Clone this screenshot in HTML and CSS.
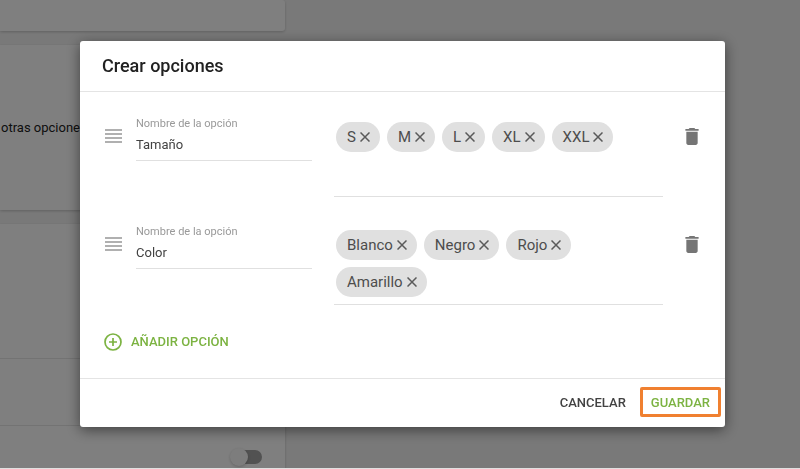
FILE: index.html
```html
<!DOCTYPE html>
<html lang="es">
<head>
    <meta charset="UTF-8" />
    <meta name="viewport" content="width=device-width, initial-scale=1" />
    <title>Crear opciones</title>
    <link rel="stylesheet" href="styles.css">
</head>
<body>
<svg class="sprite" aria-hidden="true">
    <symbol id="icon-close" viewBox="0 0 10 10"><path d="M.5.5l9 9M9.500.5l-9 9" fill="none" stroke="currentColor" stroke-width="1.5"/></symbol>
    <symbol id="icon-drag" viewBox="0 0 17 14"><path d="M0 1h17M0 5h17M0 9h17M0 13h17" fill="none" stroke="currentColor" stroke-width="2"/></symbol>
    <symbol id="icon-trash" viewBox="5 3 14 18"><path d="M6 19c0 1.1.9 2 2 2h8c1.1 0 2-.9 2-2V7H6v12zM19 4h-3.500l-1-1h-5l-1 1H5v2h14V4z" fill="currentColor"/></symbol>
    <symbol id="icon-add" viewBox="0 0 18 18"><path d="M9 5v8M5 9h8" fill="none" stroke="currentColor" stroke-width="1.700"/><circle cx="9" cy="9" r="8" fill="none" stroke="currentColor" stroke-width="1.700"/></symbol>
</svg>

<main class="page">
    <section class="card card-top"></section>
    <section class="card card-text">
        <p>otras opciones</p>
    </section>
    <section class="card card-list">
        <div class="list-block list-block-tall"></div>
        <div class="list-block"></div>
        <div class="list-block list-block-last">
            <input type="checkbox" class="switch" aria-label="Activar" />
        </div>
    </section>
</main>

<div class="overlay">
    <div class="modal" role="dialog" aria-labelledby="modalTitle">
        <header class="modal-header">
            <h1 id="modalTitle">Crear opciones</h1>
        </header>

        <div class="modal-body">
            <div class="option-row">
                <button class="icon-btn drag" aria-label="Mover"><svg width="17" height="14"><use href="#icon-drag"/></svg></button>
                <div class="field">
                    <label for="option1">Nombre de la opción</label>
                    <input type="text" id="option1" value="Tamaño" />
                </div>
                <div class="chips">
                    <span class="chip">S<button aria-label="Quitar S"><svg width="10" height="10"><use href="#icon-close"/></svg></button></span>
                    <span class="chip">M<button aria-label="Quitar M"><svg width="10" height="10"><use href="#icon-close"/></svg></button></span>
                    <span class="chip">L<button aria-label="Quitar L"><svg width="10" height="10"><use href="#icon-close"/></svg></button></span>
                    <span class="chip">XL<button aria-label="Quitar XL"><svg width="10" height="10"><use href="#icon-close"/></svg></button></span>
                    <span class="chip">XXL<button aria-label="Quitar XXL"><svg width="10" height="10"><use href="#icon-close"/></svg></button></span>
                </div>
                <button class="icon-btn trash" aria-label="Eliminar"><svg width="14" height="17"><use href="#icon-trash"/></svg></button>
            </div>

            <div class="option-row">
                <button class="icon-btn drag" aria-label="Mover"><svg width="17" height="14"><use href="#icon-drag"/></svg></button>
                <div class="field">
                    <label for="option2">Nombre de la opción</label>
                    <input type="text" id="option2" value="Color" />
                </div>
                <div class="chips">
                    <span class="chip">Blanco<button aria-label="Quitar Blanco"><svg width="10" height="10"><use href="#icon-close"/></svg></button></span>
                    <span class="chip">Negro<button aria-label="Quitar Negro"><svg width="10" height="10"><use href="#icon-close"/></svg></button></span>
                    <span class="chip">Rojo<button aria-label="Quitar Rojo"><svg width="10" height="10"><use href="#icon-close"/></svg></button></span>
                    <span class="chip">Amarillo<button aria-label="Quitar Amarillo"><svg width="10" height="10"><use href="#icon-close"/></svg></button></span>
                </div>
                <button class="icon-btn trash" aria-label="Eliminar"><svg width="14" height="17"><use href="#icon-trash"/></svg></button>
            </div>

            <button class="add-btn"><svg width="18" height="18"><use href="#icon-add"/></svg>AÑADIR OPCIÓN</button>
        </div>

        <footer class="modal-footer">
            <button class="btn">CANCELAR</button>
            <button class="btn btn-save">GUARDAR</button>
        </footer>
    </div>
</div>
</body>
</html>
```
FILE: styles.css
```css
* { box-sizing: border-box; }
body {
    font-family: Roboto, "Liberation Sans", sans-serif;
    background: #e0e0e0;
    margin: 0;
    color: #212121;
}
button {
    font-family: inherit;
    background: none;
    border: 0;
    padding: 0;
    cursor: pointer;
}
svg { display: block; }
.sprite { position: absolute; width: 0; height: 0; }

/* page behind the dialog */
.page {
    display: flex;
    flex-direction: column;
    gap: 14px;
    height: calc(100vh - 1px);
    padding-right: calc(100% - 285px);
    background: #f3f3f3;
    overflow: hidden;
}
.card {
    flex: none;
    background: #fff;
    border-radius: 0 3px 3px 0;
    box-shadow: 0 1px 3px rgba(0,0,0,0.2);
}
.card-top { height: 31px; }
.card-text {
    display: flex;
    align-items: center;
    height: 165px;
}
.card-text p { margin: 0 0 0 1px; font-size: 13px; }
.list-block {
    height: 67px;
    border-bottom: 1px solid #e6e6e6;
}
.list-block-tall { height: 135px; }
.list-block-last { padding: 23px 23px 0; display: flex; justify-content: flex-end; }
.switch {
    appearance: none;
    width: 28px;
    height: 14px;
    margin: 1px 0 0;
    border-radius: 7px;
    background: #a4a4a4;
}
.switch::before {
    content: "";
    display: block;
    width: 18px;
    height: 18px;
    margin: -2px 0 0 -4px;
    border-radius: 50%;
    background: #fafafa;
    box-shadow: 0 1px 3px rgba(0,0,0,0.2);
}

.overlay {
    position: fixed;
    inset: 0 0 1px;
    display: flex;
    align-items: flex-start;
    padding: 41px 75px 0 80px;
    background: rgba(0,0,0,0.5);
}
.modal {
    flex: 1;
    background: #fff;
    border-radius: 3px;
    box-shadow: 0 3px 14px rgba(0,0,0,0.5);
}
.modal-header {
    padding: 13px 22px;
    border-bottom: 1px solid #e4e4e4;
}
.modal-header h1 {
    margin: 0;
    font-size: 18px;
    line-height: 24px;
    font-weight: 500;
}
.modal-body { padding: 24px 22px 26px; }

.option-row {
    display: flex;
    align-items: flex-start;
    margin-bottom: 27px;
}
.icon-btn {
    display: flex;
    align-items: center;
    height: 30px;
    margin-top: 5px;
}
.drag { color: #b0b0b0; padding: 0 14px 0 3px; }
.trash { color: #757575; padding: 0 4px 0 22px; }
.field {
    width: 176px;
    margin-right: 22px;
}
.field label {
    display: block;
    font-size: 11px;
    line-height: 16px;
    color: #999;
}
.field input {
    display: block;
    width: 100%;
    height: 29px;
    padding: 0 0 4px;
    border: 0;
    border-bottom: 1px solid #e0e0e0;
    background: none;
    font-family: inherit;
    font-size: 13px;
    color: #424242;
    outline: none;
}
.chips {
    flex: 1;
    display: flex;
    flex-wrap: wrap;
    align-content: flex-start;
    gap: 7px;
    min-height: 81px;
    padding: 6px 2px 0;
    border-bottom: 1px solid #e0e0e0;
}
.chip {
    display: flex;
    align-items: center;
    gap: 4px;
    height: 30px;
    padding: 0 10px 0 11px;
    border-radius: 15px;
    background: #e0e0e0;
    font-size: 15px;
    color: #4d4d4d;
}
.chip button { color: #5a5a5a; }

.add-btn {
    display: flex;
    align-items: center;
    gap: 9px;
    padding: 0 2px;
    font-size: 13px;
    line-height: 20px;
    font-weight: 500;
    color: #7cb342;
}
.modal-footer {
    display: flex;
    justify-content: flex-end;
    gap: 6px;
    padding: 8px 4px 10px;
    border-top: 1px solid #e4e4e4;
}
.btn {
    height: 30px;
    padding: 0 8px;
    font-size: 13px;
    font-weight: 500;
    color: #424242;
}
.btn-save {
    border: 3px solid #f08030;
    border-radius: 2px;
    color: #7cb342;
}
```
